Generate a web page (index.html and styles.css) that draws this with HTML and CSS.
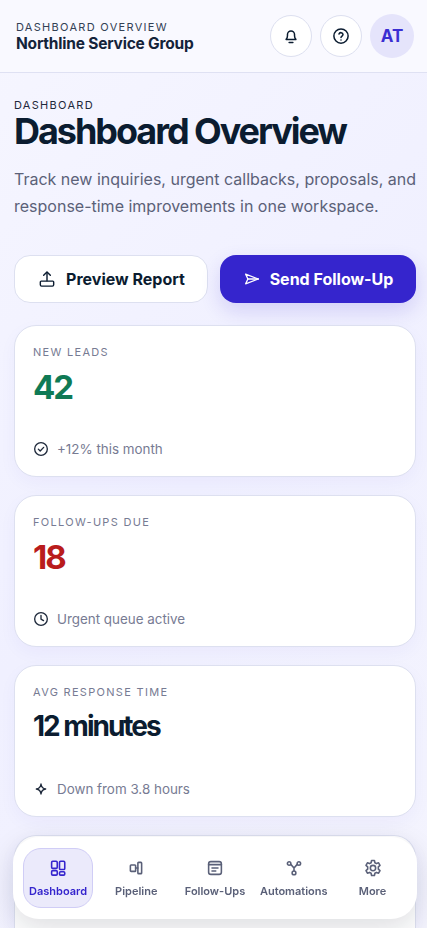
FILE: index.html
```html
<!DOCTYPE html>
<html lang="en">
<head>
<meta charset="utf-8">
<title>Dashboard Overview</title>
<link rel="stylesheet" href="styles.css">
</head>
<body>
<header class="topbar">
  <div class="brand">
    <div class="brand-eyebrow">DASHBOARD OVERVIEW</div>
    <div class="brand-name">Northline Service Group</div>
  </div>
  <div class="top-actions">
    <button class="round-btn" aria-label="Notifications">
      <svg class="ico ico-lg" viewBox="0 0 24 24"><path d="M5.500 16.500c1.300-1.200 1.800-2.500 1.800-4.700V10a4.700 4.700 0 0 1 9.400 0v1.800c0 2.200.5 3.500 1.800 4.700z"/><path d="M9.500 20.500h5"/></svg>
    </button>
    <button class="round-btn" aria-label="Help">
      <svg class="ico ico-lg" viewBox="0 0 24 24"><circle cx="12" cy="12" r="9.500"/><path d="M9.300 9.300a2.800 2.800 0 0 1 5.400.8c0 1.900-2.700 2.100-2.700 3.900"/><path d="M12 17.300h.01"/></svg>
    </button>
    <div class="avatar">AT</div>
  </div>
</header>
<main class="content">
  <section class="hero">
    <div class="eyebrow">DASHBOARD</div>
    <h1>Dashboard Overview</h1>
    <p>Track new inquiries, urgent callbacks, proposals, and response-time improvements in one workspace.</p>
  </section>
  <div class="actions">
    <button class="btn btn-light">
      <svg class="ico btn-ico" viewBox="0 0 24 24"><path d="M12 14V4"/><path d="M8 7.500 12 3.500l4 4"/><path d="M5 14.500h14a1 1 0 0 1 1 1V19a1.500 1.500 0 0 1-1.500 1.500h-13A1.500 1.500 0 0 1 4 19v-3.500a1 1 0 0 1 1-1z"/></svg>
      Preview Report
    </button>
    <button class="btn btn-primary">
      <svg class="ico btn-ico" viewBox="0 0 24 24"><path d="M3.500 5.500 20.500 12l-17 6.500L6.500 12z"/><path d="M6.500 12h14"/></svg>
      Send Follow-Up
    </button>
  </div>
  <section class="cards">
    <article class="card">
      <div class="card-label">NEW LEADS</div>
      <div class="card-value card-value-num green">42</div>
      <div class="card-note">
        <svg class="ico note-ico" viewBox="0 0 24 24"><circle cx="12" cy="12" r="9.500"/><path d="m8 12.200 2.800 2.800 5.200-5.500"/></svg>
        +12% this month
      </div>
    </article>
    <article class="card">
      <div class="card-label">FOLLOW-UPS DUE</div>
      <div class="card-value card-value-num red">18</div>
      <div class="card-note">
        <svg class="ico note-ico" viewBox="0 0 24 24"><circle cx="12" cy="12" r="9.500"/><path d="M12 6.500v5.800l3.800 2.200"/></svg>
        Urgent queue active
      </div>
    </article>
    <article class="card">
      <div class="card-label">AVG RESPONSE TIME</div>
      <div class="card-value">12 minutes</div>
      <div class="card-note">
        <svg class="ico note-ico" viewBox="0 0 24 24"><path d="M12 4.500c.6 4.600 2.400 6.900 7 7.500-4.600.6-6.400 2.900-7 7.500-.6-4.600-2.400-6.900-7-7.500 4.600-.6 6.400-2.900 7-7.500z"/></svg>
        Down from 3.8 hours
      </div>
    </article>
    <article class="card card-cut"></article>
  </section>
</main>
<nav class="bottom-nav">
  <a class="nav-item active">
    <svg class="ico nav-ico" viewBox="0 0 24 24"><rect x="3.500" y="3" width="7.500" height="9.500" rx="1.500"/><rect x="14" y="3" width="7" height="11" rx="1.500"/><rect x="3.500" y="15.500" width="7.500" height="6" rx="1.500"/><rect x="14" y="17" width="7" height="4.500" rx="1.500"/></svg>
    Dashboard
  </a>
  <a class="nav-item">
    <svg class="ico nav-ico" viewBox="0 0 24 24"><rect x="4.500" y="8" width="7" height="8.500" rx="1"/><path d="M11.500 12h3"/><rect x="14.500" y="4.500" width="5" height="15" rx="1"/></svg>
    Pipeline
  </a>
  <a class="nav-item">
    <svg class="ico nav-ico" viewBox="0 0 24 24"><rect x="3.500" y="3.500" width="17" height="17" rx="3"/><path d="M3.500 7.500h17M8 12h8M8 16h5"/></svg>
    Follow-Ups
  </a>
  <a class="nav-item">
    <svg class="ico nav-ico" viewBox="0 0 24 24"><circle cx="5.500" cy="6" r="2.300"/><circle cx="18.500" cy="6" r="2.300"/><circle cx="12" cy="18.500" r="2.500"/><path d="M12 16v-4M8 7.500 12 12M16 7.500 12 12"/></svg>
    Automations
  </a>
  <a class="nav-item">
    <svg class="ico nav-ico nav-ico-gear" viewBox="0 0 24 24"><circle cx="12" cy="12" r="3.200"/><path d="M10.300 3h3.400l.6 2.700 1.800 1 2.600-.9 1.700 3-2 1.800v2.800l2 1.800-1.700 3-2.600-.9-1.800 1-.6 2.700h-3.400l-.6-2.700-1.800-1-2.600.9-1.700-3 2-1.800v-2.800l-2-1.800 1.700-3 2.600.9 1.800-1z"/></svg>
    More
  </a>
</nav>
</body>
</html>
```
FILE: styles.css
```css
* { box-sizing: border-box; }
html, body { margin: 0; padding: 0; }
body {
  height: 928px;
  overflow: hidden;
  font-family: Inter, "Liberation Sans", sans-serif;
  color: #0b1c30;
  background: linear-gradient(135deg, #f6f6ff 0%, #f0f0ff 50%, #f4f4fe 100%);
}
.ico {
  width: 16px; height: 16px; fill: none; stroke: currentColor;
  stroke-width: 2; stroke-linecap: round; stroke-linejoin: round; flex: none;
}
.ico-lg { width: 18px; height: 18px; }
.topbar {
  height: 73px;
  padding: 0 13px 0 16px;
  display: flex; align-items: center; justify-content: space-between;
  background: #f9f9ff;
  border-bottom: 1px solid #dfe1f3;
}
.brand { padding-top: 2px; }
.brand-eyebrow { font-size: 11px; line-height: 14px; letter-spacing: 1.300px; color: #334155; }
.brand-name { font-size: 15.500px; line-height: 20px; font-weight: 700; letter-spacing: -0.200px; color: #14233a; }
.top-actions { display: flex; align-items: center; gap: 8px; }
.round-btn {
  width: 42px; height: 42px; padding: 0; border-radius: 50%;
  background: #fff; border: 1px solid #dde0f0; color: #0b1c30;
  display: flex; align-items: center; justify-content: center;
}
.avatar {
  width: 44px; height: 44px; border-radius: 50%;
  background: #e5e4fb; color: #3a2ed2;
  font-size: 17px; font-weight: 700;
  display: flex; align-items: center; justify-content: center;
}
.content { padding: 26px 0 0 14px; }
.eyebrow { font-size: 11px; line-height: 13px; letter-spacing: 1.300px; color: #1e293b; }
h1 {
  margin: -1px 0 0; font-size: 36px; line-height: 40px; font-weight: 700;
  letter-spacing: -2.050px; color: #0b1c30;
}
.hero p {
  margin: 15px 0 0; width: 410px; font-size: 16px; line-height: 27px; color: #5b6178;
}
.actions { display: flex; gap: 12px; margin-top: 35px; }
.btn {
  height: 48px; padding: 0 0 1px; border-radius: 16px; font: inherit; font-size: 16px; font-weight: 700;
  display: flex; align-items: center; justify-content: center; gap: 9px;
}
.btn-ico { width: 20px; height: 20px; stroke-width: 1.700; }
.btn-light { width: 194px; background: #fff; border: 1px solid #dde0f0; color: #0b1c30; }
.btn-primary {
  width: 196px; background: #3525cd; border: none; color: #fff;
  box-shadow: 0 8px 20px rgba(53, 37, 205, .16);
}
.btn-primary .btn-ico { width: 18px; height: 18px; }
.cards { display: flex; flex-direction: column; gap: 18px; margin-top: 22px; width: 402px; }
.card {
  height: 152px; flex: none; border-radius: 22px; background: #fff;
  border: 1px solid #dde0f0; padding: 19px 18px 18px;
  display: flex; flex-direction: column;
  box-shadow: 0 6px 18px rgba(53, 37, 205, .04);
}
.card-cut { height: 93px; border-bottom: none; border-radius: 22px 22px 0 0; }
.card-label { font-size: 11px; line-height: 14px; letter-spacing: 1.300px; color: #777b93; }
.card-value {
  font-size: 28px; line-height: 36px; margin-top: 9px; font-weight: 700;
  letter-spacing: -2px; color: #0b1c30;
}
.card-value-num { font-size: 33px; margin-top: 10px; }
.green { color: #0f7a55; }
.red { color: #b91c1c; }
.card-note {
  margin-top: auto; display: flex; align-items: center; gap: 8px;
  font-size: 13.400px; line-height: 18px; color: #777b93;
}
.note-ico { width: 16px; height: 16px; color: #1e293b; }
.bottom-nav {
  position: fixed; left: 13px; top: 837px; width: 404px; height: 82px;
  padding: 11px 9px 11px 10px;
  display: flex; align-items: stretch; justify-content: space-between;
  background: #fff; border-radius: 26px;
  box-shadow: 0 10px 30px rgba(15, 23, 42, .14);
}
.nav-item {
  width: 71px; border-radius: 18px; border: 1px solid transparent;
  display: flex; flex-direction: column; align-items: center; justify-content: center; gap: 7px;
  font-size: 11px; line-height: 14px; font-weight: 600; color: #5a6078;
  white-space: nowrap;
}
.nav-ico { width: 18px; height: 18px; stroke-width: 2.100; }
.nav-ico-gear { width: 20px; height: 20px; margin: -1px 0; stroke-width: 1.900; }
.nav-item.active { width: 70px; background: #ebeafb; border-color: #d0cdf6; color: #3525cd; }
```
